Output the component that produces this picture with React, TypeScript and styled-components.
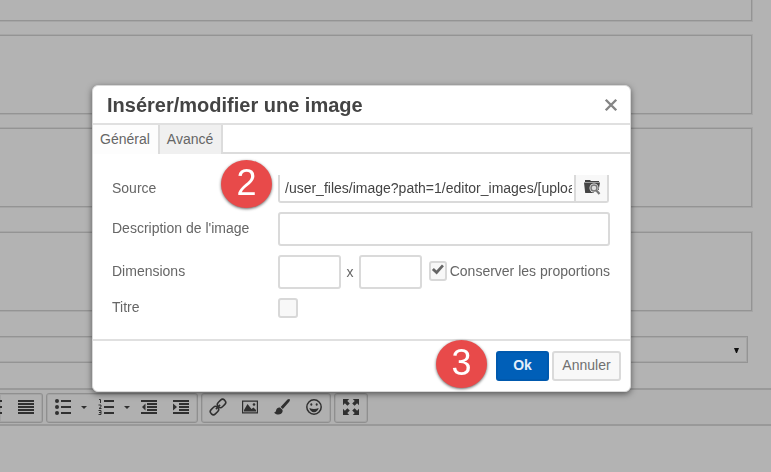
import React, { useState } from "react";
import styled, { createGlobalStyle, css } from "styled-components";

const GlobalStyle = createGlobalStyle`
  *, *::before, *::after { box-sizing: border-box; }
  html, body, #root { height: 100%; }
  body {
    margin: 0;
    overflow: hidden;
    background: #b3b3b3;
    font-family: "Liberation Sans", Arial, sans-serif;
    font-size: 14px;
    color: #666;
  }
  button, input, select, textarea { font: inherit; color: inherit; }
`;

/* ---------- form behind the dialog ---------- */

const Page = styled.main`
  min-height: 100%;
  display: flex;
  flex-direction: column;
`;

const Field = styled.textarea<{ $height: number; $gap: number }>`
  display: block;
  height: ${(p) => p.$height}px;
  margin: 0 18px ${(p) => p.$gap}px 0;
  resize: none;
  background: transparent;
  border: 1px solid #a6a6a6;
  border-left: 0;
  border-radius: 0;
  box-shadow: inset -1px -1px 0 #949494, inset 0 1px 0 #949494;
  outline: none;

  &:first-child {
    border-top: 0;
    box-shadow: inset -1px -1px 0 #949494;
  }
`;

const SelectWrap = styled.div`
  position: relative;
  margin: 0 23px 25px 0;
`;

const Select = styled.select`
  display: block;
  width: 100%;
  height: 27px;
  appearance: none;
  background: transparent;
  border: 1px solid #949494;
  border-left: 0;
  border-radius: 0;
  box-shadow: inset -1px -1px 0 #a6a6a6, inset 0 1px 0 #a6a6a6;
`;

const SelectArrow = styled.svg`
  position: absolute;
  right: 9px;
  top: 12px;
  pointer-events: none;
`;

const Editor = styled.section`
  flex: 1;
  border-top: 2px solid #999;
`;

const Toolbar = styled.div`
  display: flex;
  gap: 3px;
  padding: 3px 0 1px;
  border-bottom: 2px solid #999;
  background: #b0b0b0;
`;

const Group = styled.div<{ $cut?: boolean }>`
  display: flex;
  height: 30px;
  border: 1px solid #8f8f8f;
  border-radius: 3px;
  box-shadow: inset 0 0 0 1px #a4a4a4;
  ${(p) =>
    p.$cut &&
    css`
      width: 43px;
      justify-content: flex-end;
      overflow: hidden;
      border-left: 0;
      border-radius: 0 3px 3px 0;
    `}
`;

const Tool = styled.button<{ $menu?: boolean }>`
  flex: none;
  display: flex;
  align-items: center;
  justify-content: ${(p) => (p.$menu ? "space-between" : "center")};
  width: ${(p) => (p.$menu ? 43 : 32)}px;
  padding: ${(p) => (p.$menu ? "0 3px 3px 8px" : "0 0 3px")};
  border: 0;
  background: transparent;
  color: #303030;
`;

/* ---------- dialog ---------- */

const Overlay = styled.div`
  position: fixed;
  inset: 0;
  display: flex;
  align-items: flex-start;
  padding: 85px 140px 0 92px;
`;

const Dialog = styled.section`
  flex: 1;
  min-width: 0;
  background: #fff;
  border: 1px solid #d8d8d8;
  border-radius: 6px;
  box-shadow: 0 2px 6px rgba(0, 0, 0, 0.5);
`;

const Header = styled.header`
  display: flex;
  align-items: center;
  justify-content: space-between;
  height: 39px;
  padding: 0 12px 0 14px;
  border-bottom: 2px solid #e0e0e0;
`;

const Title = styled.h1`
  margin: 0;
  font-size: 20px;
  line-height: 24px;
  color: #444;
`;

const Close = styled.button`
  display: flex;
  padding: 0;
  border: 0;
  background: none;
  color: #858585;
`;

const Tabs = styled.div`
  display: flex;
  height: 29px;
`;

const Tab = styled.button<{ $active: boolean }>`
  padding: 0 8px 1px 7px;
  border: 0;
  border-right: 2px solid #dcdcdc;
  background: ${(p) => (p.$active ? "#fdfdfd" : "#f0f0f0")};
`;

const TabFill = styled.div`
  flex: 1;
  border-bottom: 2px solid #dcdcdc;
`;

const Body = styled.div`
  display: flex;
  flex-direction: column;
  gap: 9px;
  padding: 21px 20px 21px 19px;
`;

const Row = styled.div`
  position: relative;
  display: grid;
  grid-template-columns: 166px 1fr;
  align-items: center;
`;

const Label = styled.label`
  line-height: 18px;
  padding-bottom: 2px;
`;

const Controls = styled.div`
  display: flex;
  align-items: center;
  min-width: 0;
`;

const TextInput = styled.input<{ $size?: "small" }>`
  min-width: 0;
  width: ${(p) => (p.$size === "small" ? "63px" : "100%")};
  height: 34px;
  padding: 0 5px;
  border: 2px solid #dadada;
  border-radius: 3px;
  background: #fff;
  color: #444;
  outline: none;
`;

const SourceInput = styled(TextInput)`
  flex: 1;
  height: 28px;
  padding: 0 2px 0 5px;
  border-top: 0;
  border-radius: 0 0 0 3px;
`;

const Browse = styled.button`
  display: flex;
  align-items: center;
  justify-content: center;
  width: 33px;
  height: 28px;
  margin-right: 1px;
  padding: 0 0 2px;
  border: 2px solid #dadada;
  border-width: 0 2px 2px 0;
  border-radius: 0 0 3px 0;
  background: #f8f8f8;
  color: #444;
`;

const Times = styled.span`
  width: 18px;
  text-align: center;
`;

const Check = styled.span<{ $large?: boolean }>`
  position: relative;
  display: flex;
  flex: none;
  width: ${(p) => (p.$large ? 20 : 18)}px;
  height: 20px;
  svg {
    position: absolute;
    left: 2px;
    top: 2px;
    pointer-events: none;
  }
  input:not(:checked) + svg { display: none; }
`;

const CheckInput = styled.input`
  appearance: none;
  width: 100%;
  height: 100%;
  margin: 0;
  border: 2px solid #d8d8d8;
  border-radius: 3px;
  background: #f8f8f8;
`;

const Keep = styled.label`
  flex: none;
  margin-left: auto;
  padding-bottom: 2px;
  display: flex;
  align-items: center;
  gap: 3px;
  white-space: nowrap;
`;

const Footer = styled.footer`
  position: relative;
  display: flex;
  justify-content: flex-end;
  gap: 3px;
  padding: 10px 9px;
  border-top: 2px solid #e0e0e0;
`;

const Action = styled.button<{ $primary?: boolean }>`
  width: ${(p) => (p.$primary ? 53 : 69)}px;
  height: 30px;
  padding: 0 0 3px;
  border: 2px solid ${(p) => (p.$primary ? "#0059ae" : "#dadada")};
  border-radius: 3px;
  background: ${(p) => (p.$primary ? "#005fb8" : "#f8f8f8")};
  color: ${(p) => (p.$primary ? "#e3eefa" : "#707070")};
  font-weight: ${(p) => (p.$primary ? 700 : 400)};
`;

const Badge = styled.span<{ $place: "row" | "footer" }>`
  position: absolute;
  top: ${(p) => (p.$place === "row" ? -15 : -1)}px;
  ${(p) => (p.$place === "row" ? "left: 109px" : "right: 143px")};
  display: flex;
  align-items: center;
  justify-content: center;
  width: 51px;
  height: 48px;
  padding-bottom: 2px;
  border-radius: 50%;
  background: #e84a4a;
  box-shadow: 0 1px 3px rgba(0, 0, 0, 0.6);
  color: #fff;
  font-size: 36px;
  line-height: 44px;
`;

/* ---------- icons ---------- */

const paths: Record<string, React.ReactNode> = {
  left: <path d="M0 1h16v2H0zM0 4h10v2H0zM0 7h16v2H0zM0 10h10v2H0zM0 13h16v2H0z" />,
  justify: <path d="M0 1h16v2H0zM0 4h16v2H0zM0 7h16v2H0zM0 10h16v2H0zM0 13h16v2H0z" />,
  bullets: (
    <>
      <path d="M6 1h10v2H6zM6 7h10v2H6zM6 13h10v2H6z" />
      <circle cx="2" cy="2" r="2" />
      <circle cx="2" cy="8" r="2" />
      <circle cx="2" cy="14" r="2" />
    </>
  ),
  numbers: (
    <>
      <path d="M6 1h10v2H6zM6 7h10v2H6zM6 13h10v2H6z" />
      <path d="M1 .5h1.500V4M.5 6H3v1.700L1 9.500h2.500M.5 11.500H3v4H.5M1 13.500h2" fill="none" stroke="currentColor" />
    </>
  ),
  outdent: <path d="M0 1h16v2H0zM6 4h10v2H6zM6 7h10v2H6zM6 10h10v2H6zM0 13h16v2H0zM4.500 4.500v7L1 8z" />,
  indent: <path d="M0 1h16v2H0zM6 4h10v2H6zM6 7h10v2H6zM6 10h10v2H6zM0 13h16v2H0zM0 4.500v7L4 8z" />,
  link: (
    <g fill="none" stroke="currentColor" strokeWidth="1.500" transform="rotate(-45 8 8)">
      <rect x="-1.500" y="5" width="9" height="6" rx="2.800" />
      <rect x="8.500" y="5" width="9" height="6" rx="2.800" />
      <path d="M5 8h6" />
    </g>
  ),
  image: (
    <>
      <path fillRule="evenodd" d="M0 1.500h16v13H0zm1.200 1.200v10.600h13.600V2.700z" />
      <path d="M2 12.500V11l3.500-6 4 5 2-1.500 2.500 2.500v1.500z" />
      <circle cx="12" cy="5.500" r="1.300" />
    </>
  ),
  brush: (
    <path d="M15.700.3c-.6-.6-1.500-.3-2.200.3L6.600 7.900l2.200 2.200 6.400-7.400c.6-.7 1-1.800.5-2.400zM5.900 8.600c-1.700-.4-3.300.7-3.700 2.300-.3 1.400-.7 2.200-2.200 2.500 1.700 2.600 7.800 3.100 8.600-1 .1-.6 0-1.200-.2-1.700z" />
  ),
  smile: (
    <>
      <circle cx="8" cy="8" r="7.200" fill="none" stroke="currentColor" strokeWidth="1.500" />
      <ellipse cx="5.300" cy="5.500" rx="1" ry="1.300" />
      <ellipse cx="10.700" cy="5.500" rx="1" ry="1.300" />
      <path d="M3.300 9c3 1.400 6.400 1.400 9.400 0-.6 2.700-2.500 4.200-4.700 4.200S3.900 11.700 3.300 9z" />
    </>
  ),
  full: (
    <path d="M0 0h6.200L4.300 1.900l2.500 2.500-2.400 2.400-2.500-2.500L0 6.200zM16 0v6.200l-1.900-1.900-2.500 2.500-2.400-2.400 2.500-2.500L9.800 0zM0 16V9.800l1.900 1.900 2.500-2.500 2.400 2.400-2.500 2.500L6.200 16zM16 16H9.800l1.900-1.900-2.500-2.500 2.400-2.400 2.500 2.500 1.900-1.900z" />
  ),
  browse: (
    <>
      <path d="M1 1h5l1 1h8v1H1z" />
      <path d="M0 3.500h16L15 9v5H1.200z" />
      <circle cx="10" cy="9" r="4.500" fill="#f8f8f8" />
      <path d="M10 11h6v5h-6z" fill="#f8f8f8" />
      <circle cx="10" cy="9" r="3" fill="#ddd" stroke="#777" strokeWidth="1.500" />
      <path d="m12.200 11.200 3.300 3.800" stroke="#777" strokeWidth="2.200" />
    </>
  ),
  close: <path d="m2 2 12 12m0-12-12 12" fill="none" stroke="currentColor" strokeWidth="2.800" />,
  check: <path d="m1 8 2.300-2.300 3 2.800 6.200-6.700 2.300 2L6.500 13z" />,
};

const Icon = ({ name, size = 16 }: { name: string; size?: number }) => (
  <svg width={size} height={size} viewBox="0 0 16 16" fill="currentColor" overflow="visible" aria-hidden>
    {paths[name]}
  </svg>
);

const Caret = () => (
  <svg width="6" height="4" viewBox="0 0 6 4" fill="currentColor" overflow="visible" aria-hidden>
    <path d="M0 1h6L3 4z" />
  </svg>
);

const toolGroups = [
  ["left", "justify"],
  ["bullets", "numbers", "outdent", "indent"],
  ["link", "image", "brush", "smile"],
  ["full"],
];
const withMenu = ["bullets", "numbers"];

const fields = [
  { height: 22, gap: 12 },
  { height: 81, gap: 12 },
  { height: 81, gap: 23 },
  { height: 81, gap: 24 },
];

export default function App() {
  const [tab, setTab] = useState("Général");
  const [source, setSource] = useState("/user_files/image?path=1/editor_images/[upload]");

  return (
    <>
      <GlobalStyle />
      <Page>
        {fields.map((f, i) => (
          <Field key={i} $height={f.height} $gap={f.gap} aria-label={`Champ ${i + 1}`} />
        ))}
        <SelectWrap>
          <Select aria-label="Liste" />
          <SelectArrow width="5" height="5" viewBox="0 0 5 5" fill="#111" aria-hidden>
            <path d="M0 0h5L3 5H2z" />
          </SelectArrow>
        </SelectWrap>
        <Editor>
          <Toolbar>
            {toolGroups.map((group, i) => (
              <Group key={i} $cut={i === 0}>
                {group.map((name) => (
                  <Tool key={name} type="button" aria-label={name} $menu={withMenu.includes(name)}>
                    <Icon name={name} />
                    {withMenu.includes(name) && <Caret />}
                  </Tool>
                ))}
              </Group>
            ))}
          </Toolbar>
        </Editor>
      </Page>

      <Overlay>
        <Dialog role="dialog" aria-labelledby="dialog-title">
          <Header>
            <Title id="dialog-title">Insérer/modifier une image</Title>
            <Close type="button" aria-label="Fermer">
              <Icon name="close" size={14} />
            </Close>
          </Header>
          <Tabs role="tablist">
            {["Général", "Avancé"].map((name) => (
              <Tab
                key={name}
                type="button"
                role="tab"
                aria-selected={tab === name}
                $active={tab === name}
                onClick={() => setTab(name)}
              >
                {name}
              </Tab>
            ))}
            <TabFill />
          </Tabs>
          <Body>
            <Row>
              <Label htmlFor="source">Source</Label>
              <Controls>
                <SourceInput id="source" value={source} onChange={(e) => setSource(e.target.value)} />
                <Browse type="button" aria-label="Parcourir">
                  <Icon name="browse" />
                </Browse>
              </Controls>
              <Badge $place="row">2</Badge>
            </Row>
            <Row>
              <Label htmlFor="description">Description de l'image</Label>
              <TextInput id="description" />
            </Row>
            <Row>
              <Label htmlFor="width">Dimensions</Label>
              <Controls>
                <TextInput id="width" $size="small" />
                <Times>x</Times>
                <TextInput id="height" $size="small" aria-label="Hauteur" />
                <Keep>
                  <Check>
                    <CheckInput type="checkbox" defaultChecked />
                    <Icon name="check" size={14} />
                  </Check>
                  Conserver les proportions
                </Keep>
              </Controls>
            </Row>
            <Row>
              <Label htmlFor="title">Titre</Label>
              <Check $large>
                <CheckInput id="title" type="checkbox" />
                <Icon name="check" size={14} />
              </Check>
            </Row>
          </Body>
          <Footer>
            <Badge $place="footer">3</Badge>
            <Action type="button" $primary>
              Ok
            </Action>
            <Action type="button">Annuler</Action>
          </Footer>
        </Dialog>
      </Overlay>
    </>
  );
}
